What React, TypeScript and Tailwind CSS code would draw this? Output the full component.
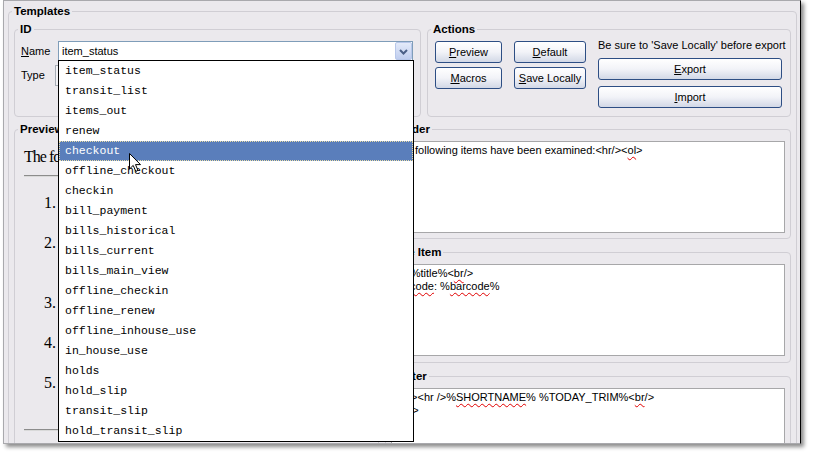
import React from "react";

const templates = [
  "item_status",
  "transit_list",
  "items_out",
  "renew",
  "checkout",
  "offline_checkout",
  "checkin",
  "bill_payment",
  "bills_historical",
  "bills_current",
  "bills_main_view",
  "offline_checkin",
  "offline_renew",
  "offline_inhouse_use",
  "in_house_use",
  "holds",
  "hold_slip",
  "transit_slip",
  "hold_transit_slip",
];

// XP style group box built on a real fieldset/legend
function Group({
  title,
  className = "",
  children,
}: {
  title: string;
  className?: string;
  children?: React.ReactNode;
}) {
  return (
    <fieldset className={`min-w-0 rounded-[4px] border border-[#d0ced4] ${className}`}>
      <legend className="ml-[3px] px-[2px] text-[11.5px] font-bold leading-[13px] text-black">
        {title}
      </legend>
      {children}
    </fieldset>
  );
}

function Btn({ first, rest, className = "" }: { first: string; rest: string; className?: string }) {
  return (
    <button
      className={`flex h-[22px] items-center justify-center rounded-[3px] border border-[#2d4e84] bg-linear-to-b from-white via-[#f2f3f8] to-[#d2d8e6] text-[11px] leading-[13px] text-black ${className}`}
    >
      <span className="underline">{first}</span>
      {rest}
    </button>
  );
}

function Squiggle({ children }: { children: React.ReactNode }) {
  return (
    <span className="underline decoration-[#e00000] decoration-wavy decoration-1 underline-offset-[2px]">
      {children}
    </span>
  );
}

function TextBox({ children, className = "" }: { children: React.ReactNode; className?: string }) {
  return (
    <div
      className={`ml-[5px] mr-[5px] mt-[5px] overflow-hidden whitespace-pre border border-[#a7a7a9] bg-white px-[1px] pt-[2px] text-[11px] leading-[13px] text-black ${className}`}
    >
      {children}
    </div>
  );
}

function Chevron() {
  return (
    <svg width="13" height="13" viewBox="0 0 13 13">
      <polyline points="3,5 6.5,8.5 10,5" fill="none" stroke="#4a5f86" strokeWidth="2" />
    </svg>
  );
}

function Cursor() {
  return (
    <svg
      className="absolute left-[70px] top-[92px]"
      width="13"
      height="20"
      viewBox="0 0 13 20"
    >
      <path
        d="M0.5 0.5 L0.5 16 L4.2 12.4 L6.8 18.4 L9 17.4 L6.5 11.6 L11.5 11.6 Z"
        fill="white"
        stroke="black"
        strokeWidth="1"
        strokeLinejoin="miter"
      />
    </svg>
  );
}

export default function App() {
  return (
    <div className="h-screen w-full bg-white font-['Liberation_Sans',Arial,sans-serif]">
      <div className="relative ml-[3px] h-[444px] w-[798px] overflow-hidden border border-[#a9a9ad] border-r-black bg-[#ebe9ed] shadow-[3px_3px_4px_rgba(0,0,0,0.45)]">
        <Group title="Templates" className="ml-[4px] mt-[4px] h-[470px] w-[789px]">
          <div className="flex flex-col px-[5px]">
            {/* top row: ID + Actions */}
            <div className="mt-[5px] flex gap-[6px]">
              <Group title="ID" className="h-[94px] w-[407px]">
                <div className="mt-[5px] flex items-center pl-[6px] pr-[7px]">
                  <span className="w-[37px] text-[11px] leading-[13px]">
                    <span className="underline">N</span>ame
                  </span>
                  <div className="flex h-[20px] flex-1 items-center justify-between border border-[#7f9db9] bg-white">
                    <span className="pl-[3px] text-[11px] leading-[13px]">item_status</span>
                    <div className="flex h-[18px] w-[17px] items-center justify-center rounded-[2px] border border-[#b7c7ea] bg-linear-to-b from-[#e4ebfa] to-[#bfcdee]">
                      <Chevron />
                    </div>
                  </div>
                </div>
                <div className="mt-[4px] flex items-center pl-[6px] pr-[7px]">
                  <span className="w-[34px] text-[11px] leading-[13px]">Type</span>
                  <div className="h-[21px] flex-1 border border-[#a5acb5] bg-[#f4f3f6]" />
                </div>
              </Group>

              <Group title="Actions" className="h-[94px] w-[364px]">
                <div className="flex items-start gap-[12px] pl-[7px] pr-[8px]">
                  <div className="mt-[5px] flex w-[67px] flex-col gap-[4px]">
                    <Btn first="P" rest="review" />
                    <Btn first="M" rest="acros" />
                  </div>
                  <div className="mt-[5px] flex w-[72px] flex-col gap-[4px]">
                    <Btn first="D" rest="efault" />
                    <Btn first="S" rest="ave Locally" />
                  </div>
                  <div className="mt-[3px] flex w-[184px] flex-col">
                    <span className="whitespace-nowrap text-[11px] leading-[13px]">
                      Be sure to 'Save Locally' before export
                    </span>
                    <Btn first="E" rest="xport" className="mt-[6px]" />
                    <Btn first="I" rest="mport" className="mt-[6px]" />
                  </div>
                </div>
              </Group>
            </div>

            {/* bottom row: Preview + Header / Item / Footer */}
            <div className="mt-[6px] flex gap-[6px]">
              <Group title="Preview" className="h-[400px] w-[365px]">
                <div className="pl-[9px] pt-[11px] font-['Liberation_Serif','Times_New_Roman',serif] text-[16px] leading-[20px] text-black">
                  <div className="whitespace-nowrap tracking-[-1px]">
                    The following items have been examined:
                  </div>
                  <div className="mt-[8px] h-[2px] border-t border-b border-t-[#8c8c8c] border-b-[#d9d9d9]" />
                  <div className="mt-[16px] flex flex-col">
                    {[
                      ["1.", "h-[40px]"],
                      ["2.", "h-[60px]"],
                      ["3.", "h-[40px]"],
                      ["4.", "h-[40px]"],
                      ["5.", "h-[40px]"],
                    ].map(([n, h]) => (
                      <div key={n} className={`${h} flex`}>
                        <span className="w-[32px] text-right">{n}</span>
                      </div>
                    ))}
                  </div>
                  <div className="mt-[16px] h-[2px] border-t border-b border-t-[#8c8c8c] border-b-[#d9d9d9]" />
                </div>
              </Group>

              <div className="flex w-[406px] flex-col gap-[7px]">
                <Group title="Header" className="h-[116px]">
                  <TextBox className="h-[92px]">
                    {"The following items have been examined:<hr/><"}
                    <Squiggle>ol</Squiggle>
                    {">"}
                  </TextBox>
                </Group>
                <Group title="Line Item" className="h-[117px]">
                  <TextBox className="h-[92px]">
                    {"<li>%title%<"}
                    <Squiggle>br</Squiggle>
                    {"/>\n"}
                    <Squiggle>Barcode</Squiggle>
                    {": %"}
                    <Squiggle>barcode</Squiggle>
                    {"%"}
                  </TextBox>
                </Group>
                <Group title="Footer" className="h-[116px]">
                  <TextBox className="h-[92px]">
                    {"</"}
                    <Squiggle>ol</Squiggle>
                    {"><hr />%"}
                    <Squiggle>SHORTNAME</Squiggle>
                    {"% %TODAY_TRIM%<"}
                    <Squiggle>br</Squiggle>
                    {"/>\n<"}
                    <Squiggle>br</Squiggle>
                    {"/>"}
                  </TextBox>
                </Group>
              </div>
            </div>
          </div>
        </Group>

        {/* open drop-down list of the Name menulist, with the mouse pointer over it */}
        <div className="absolute left-[54px] top-[59px] h-[382px] w-[356px] border border-black bg-white font-['Liberation_Mono','Courier_New',monospace] text-[11.5px] text-black">
          {templates.map((t) =>
            t === "checkout" ? (
              <div
                key={t}
                className="flex h-[20px] items-center border border-dotted border-[#e9dca6] bg-[#5a7ebb] pl-[5px] text-white"
              >
                {t}
              </div>
            ) : (
              <div key={t} className="flex h-[20px] items-center pl-[6px]">
                {t}
              </div>
            )
          )}
          <Cursor />
        </div>
      </div>
    </div>
  );
}
